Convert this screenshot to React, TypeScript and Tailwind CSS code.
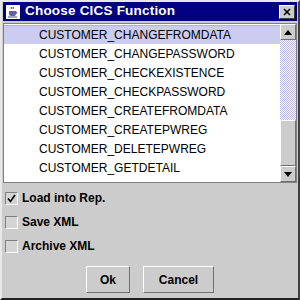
import React from 'react';

const items = [
  'CUSTOMER_CHANGEFROMDATA',
  'CUSTOMER_CHANGEPASSWORD',
  'CUSTOMER_CHECKEXISTENCE',
  'CUSTOMER_CHECKPASSWORD',
  'CUSTOMER_CREATEFROMDATA',
  'CUSTOMER_CREATEPWREG',
  'CUSTOMER_DELETEPWREG',
  'CUSTOMER_GETDETAIL',
  'CUSTOMER_GETPWREG',
];

function CheckRow({ label, checked }: { label: string; checked?: boolean }) {
  return (
    <div className="flex items-center h-[24px] gap-[4px]">
      <div className="w-[13px] h-[13px] bg-[#d4d4d4] border border-t-[#808080] border-l-[#808080] border-b-white border-r-white flex items-center justify-center">
        {checked && (
          <svg width="9" height="9" viewBox="0 0 9 9">
            <path d="M1 4.5 L3.5 7.5 L8 1" stroke="#000" strokeWidth="1.6" fill="none" />
          </svg>
        )}
      </div>
      <span className="text-[12px] font-bold text-black">{label}</span>
    </div>
  );
}

function Button({ label, w }: { label: string; w: string }) {
  return (
    <div className={`${w} h-[27px] border border-t-white border-l-white border-b-[#707070] border-r-[#707070] flex items-center justify-center text-[12px] font-bold text-black`}>
      {label}
    </div>
  );
}

export default function App() {
  return (
    <div
      className="w-[300px] h-[300px] bg-[#cccccc] border-l-2 border-t-2 border-r-2 border-b-2 border-l-[#e8e8e8] border-t-[#e8e8e8] border-r-[#404040] border-b-[#202020] flex flex-col px-[1px]"
      style={{ fontFamily: '"Liberation Sans", Arial, sans-serif' }}
    >
      {/* title bar */}
      <div className="h-[19px] bg-[#000080] flex items-center pl-[3px] pr-[2px]">
        <div className="w-[14px] h-[14px] bg-white flex items-center justify-center">
          <svg width="12" height="12" viewBox="0 0 12 12">
            <path d="M4 1 Q5 2 4 3 M6 1 Q7 2 6 3" stroke="#c00000" strokeWidth="1" fill="none" />
            <path d="M2 5 H9 V8 Q9 10 7 10 H4 Q2 10 2 8 Z" fill="#6060a0" />
            <path d="M9 6 Q11 6 9 8" stroke="#6060a0" fill="none" />
            <path d="M1 11 H10" stroke="#404080" />
          </svg>
        </div>
        <span className="ml-[5px] text-white font-bold text-[13.5px] tracking-[0.2px]">Choose CICS Function</span>
        <div className="flex-1" />
        <div className="w-[16px] h-[14px] bg-[#cccccc] border border-t-white border-l-white border-b-[#404040] border-r-[#404040] flex items-center justify-center">
          <svg width="8" height="8" viewBox="0 0 8 8">
            <path d="M1 1 L7 7 M7 1 L1 7" stroke="#000" strokeWidth="1.6" />
          </svg>
        </div>
      </div>

      {/* list */}
      <div className="mt-[2px] h-[160px] border border-[#808080] bg-white flex">
        <div className="flex-1 overflow-hidden pt-[1px]">
          {items.map((it, i) => (
            <div
              key={it}
              className={`h-[19px] flex items-center pl-[35px] text-[12px] text-black ${i === 0 ? 'bg-[#ccccf0] border-t border-[#b0b0e0]' : ''}`}
            >
              {it}
            </div>
          ))}
        </div>
        <div className="w-[16px] flex flex-col bg-[#cccccc]">
          <div className="h-[16px] border border-t-white border-l-white border-b-[#707070] border-r-[#707070] flex items-center justify-center">
            <svg width="8" height="5" viewBox="0 0 8 5"><path d="M0 5 L4 0 L8 5 Z" fill="#000" /></svg>
          </div>
          <div
            className="h-[80px]"
            style={{ backgroundImage: 'repeating-conic-gradient(#ffffff 0 25%, #b8b8d8 0 50%)', backgroundSize: '2px 2px' }}
          />
          <div className="flex-1 border border-t-white border-l-white border-b-[#707070] border-r-[#707070] bg-[#cccccc]" />
          <div className="h-[16px] border border-t-white border-l-white border-b-[#707070] border-r-[#707070] flex items-center justify-center">
            <svg width="8" height="5" viewBox="0 0 8 5"><path d="M0 0 L8 0 L4 5 Z" fill="#000" /></svg>
          </div>
        </div>
      </div>

      {/* options */}
      <div className="flex flex-col pl-[2px] mt-[3px]">
        <CheckRow label="Load into Rep." checked />
        <CheckRow label="Save XML" />
        <CheckRow label="Archive XML" />
      </div>

      <div className="flex justify-center gap-[13px] mt-[8px]">
        <Button label="Ok" w="w-[44px]" />
        <Button label="Cancel" w="w-[71px]" />
      </div>
    </div>
  );
}
